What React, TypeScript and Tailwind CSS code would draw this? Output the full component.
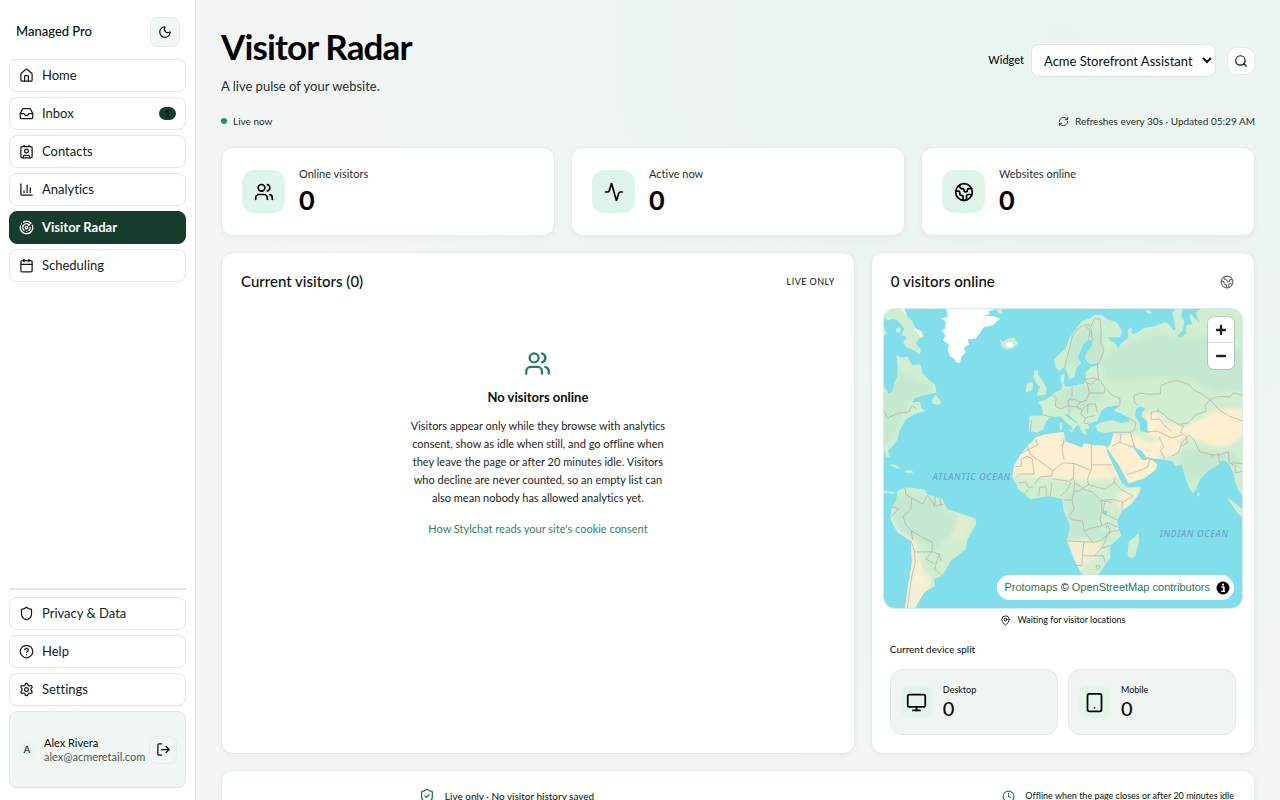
import type { ReactNode } from "react"
import {
  Activity,
  Calendar,
  ChartColumn,
  CircleHelp,
  Clock,
  Contact,
  Earth,
  House,
  Inbox,
  LogOut,
  MapPin,
  Monitor,
  Moon,
  Radar,
  RefreshCw,
  Search,
  Settings,
  Shield,
  ShieldCheck,
  Tablet,
  Users,
  type LucideIcon,
} from "lucide-react"

type NavEntry = { label: string; icon: LucideIcon; badge?: number; active?: boolean }

const mainNav: NavEntry[] = [
  { label: "Home", icon: House },
  { label: "Inbox", icon: Inbox, badge: 1 },
  { label: "Contacts", icon: Contact },
  { label: "Analytics", icon: ChartColumn },
  { label: "Visitor Radar", icon: Radar, active: true },
  { label: "Scheduling", icon: Calendar },
]

const footerNav: NavEntry[] = [
  { label: "Privacy & Data", icon: Shield },
  { label: "Help", icon: CircleHelp },
  { label: "Settings", icon: Settings },
]

const stats = [
  { label: "Online visitors", value: 0, icon: Users },
  { label: "Active now", value: 0, icon: Activity },
  { label: "Websites online", value: 0, icon: Earth },
]

const devices = [
  { label: "Desktop", value: 0, icon: Monitor },
  { label: "Mobile", value: 0, icon: Tablet },
]

function NavLink({ label, icon: Icon, badge, active }: NavEntry) {
  return (
    <a
      href="#"
      className={
        active
          ? "flex h-[33px] items-center gap-2 rounded-lg border border-[#163d2b] bg-[#163d2b] px-[9px] text-[13px] font-bold text-white"
          : "flex h-[33px] items-center gap-2 rounded-lg border border-[#e1e7e5] bg-white px-[9px] text-[13px] text-[#111c17]"
      }
    >
      <Icon size={15} />
      <span>{label}</span>
      {badge !== undefined && (
        <span className="ml-auto flex h-[13px] w-[17px] items-center justify-center rounded-full bg-[#163d2b] text-[9px] font-bold text-[#04100a]">
          {badge}
        </span>
      )}
    </a>
  )
}

function Sidebar() {
  return (
    <aside className="flex w-[196px] shrink-0 flex-col border-r border-[#e1e7e5] bg-[#fdfefe] px-[9px] pb-3">
      <div className="flex items-center justify-between pt-[17px] pr-[6px] pb-3 pl-[7px]">
        <span className="text-[13px] font-medium">Managed Pro</span>
        <button
          aria-label="Toggle dark mode"
          className="flex size-[30px] items-center justify-center rounded-lg border border-[#e6eeea] bg-[#f1f7f4]"
        >
          <Moon size={14} />
        </button>
      </div>
      <nav className="flex flex-col gap-[5px]">
        {mainNav.map((item) => (
          <NavLink key={item.label} {...item} />
        ))}
      </nav>

      <div className="mt-auto flex flex-col gap-[5px] border-t-2 border-[#e1e7e5] pt-[7px]">
        {footerNav.map((item) => (
          <NavLink key={item.label} {...item} />
        ))}
        <div className="flex h-[77px] items-center rounded-lg border border-[#e1e9e5] bg-[#eff6f3] pr-2 pl-[7px]">
          <span className="flex size-5 items-center justify-center rounded-full bg-[#ecf5f0] text-[10px] font-medium">A</span>
          <div className="ml-[7px] flex-1 text-[11px] leading-[14px]">
            <p>Alex Rivera</p>
            <p className="text-[#4a5651]">alex@acmeretail.com</p>
          </div>
          <button
            aria-label="Log out"
            className="flex size-7 items-center justify-center rounded-lg border border-[#e6eeea] bg-[#f1f7f4]"
          >
            <LogOut size={15} />
          </button>
        </div>
      </div>
    </aside>
  )
}

function Panel({ className, children }: { className?: string; children: ReactNode }) {
  return (
    <section className={`rounded-xl border border-[#e4ebe8] bg-white shadow-[0_2px_6px_rgba(20,60,40,0.04)] ${className ?? ""}`}>
      {children}
    </section>
  )
}

const eurasia =
  "M546 330 L562 312 L580 296 L592 265 L610 240 L630 213 L655 205 L668 194 L690 196 L705 207 L735 218 L752 245 L745 262 L708 262 L716 274 L726 276 L740 296 L748 280 L770 262 L768 240 L778 232 L782 254 L800 246 L815 235 L850 228 L880 216 L895 226 L905 242 L912 238 L902 190 L912 177 L932 177 L930 200 L938 215 L934 240 L918 256 L925 264 L942 252 L944 226 L962 222 L952 198 L958 192 L985 220 L972 190 L985 177 L1113 177 L1113 740 L1100 722 L1092 700 L1085 670 L1072 642 L1060 632 L1045 642 L1010 662 L985 690 L972 722 L964 732 L950 712 L940 680 L930 646 L912 650 L902 636 L872 630 L850 628 L822 622 L812 606 L790 594 L786 584 L780 590 L798 614 L812 632 L834 630 L842 634 L857 644 L850 662 L820 686 L770 702 L764 690 L742 648 L722 620 L706 596 L715 585 L722 562 L724 546 L700 550 L676 545 L670 528 L690 518 L722 512 L745 520 L775 516 L770 504 L745 490 L726 484 L742 468 L722 470 L705 472 L690 482 L682 498 L676 514 L662 518 L648 524 L652 536 L640 540 L645 556 L632 552 L624 534 L612 516 L596 502 L586 492 L578 494 L590 506 L606 516 L618 526 L610 532 L602 544 L600 532 L584 520 L566 500 L550 502 L530 506 L518 524 L514 540 L494 549 L480 546 L470 546 L472 498 L500 498 L512 496 L510 474 L498 456 L520 450 L536 440 L548 428 L568 420 L570 402 L564 384 L572 372 L577 382 L574 400 L582 412 L602 408 L636 402 L642 388 L640 370 L655 352 L680 344 L682 340 L652 342 L640 326 L642 310 L660 290 L662 272 L650 268 L634 282 L622 310 L616 324 L628 340 L614 352 L608 380 L594 390 L582 362 L578 350 L562 364 L550 352 Z"

const africa =
  "M490 564 L520 554 L575 547 L580 575 L605 585 L630 595 L635 580 L662 586 L692 588 L702 592 L706 608 L725 650 L750 700 L768 715 L808 712 L800 735 L776 766 L750 785 L735 815 L748 860 L715 890 L715 925 L680 977 L640 985 L630 977 L610 940 L585 875 L595 830 L575 785 L570 750 L532 740 L475 750 L440 720 L420 682 L425 650 L445 615 L465 590 Z"

const southAmerica =
  "M75 725 L96 714 L120 715 L155 720 L165 735 L210 750 L225 780 L260 790 L310 808 L312 825 L285 870 L280 900 L235 935 L210 980 L185 990 L188 1010 L155 1030 L140 1055 L128 1077 L97 1077 L105 1020 L118 940 L115 875 L75 850 L52 805 L58 775 L70 755 Z"

const northAmerica =
  "M33 177 L95 177 L105 200 L120 215 L128 235 L148 245 L155 262 L140 265 L130 280 L145 300 L142 314 L118 298 L100 292 L92 278 L102 262 L88 255 L95 235 L75 212 L60 206 L45 212 L33 202 Z M72 316 L88 324 L106 320 L118 346 L144 344 L150 370 L170 392 L188 404 L192 428 L160 436 L124 446 L120 458 L142 456 L146 474 L160 484 L130 492 L100 508 L80 545 L75 570 L60 590 L46 602 L52 625 L42 622 L33 600 L33 408 L48 432 L62 424 L64 402 L74 380 L75 350 Z M178 452 L190 434 L206 458 L200 466 L180 462 Z M70 236 L84 232 L82 248 L72 248 Z M33 226 L42 250 L33 262 Z"

const islands =
  "M382 266 L392 276 L404 268 L425 263 L437 280 L425 294 L404 300 L388 288 Z M372 177 L388 177 L390 192 L378 190 Z M486 362 L498 362 L498 376 L512 392 L524 418 L520 434 L494 438 L498 422 L504 412 L494 402 L484 384 Z M464 402 L482 396 L482 420 L460 428 Z M566 376 L578 372 L574 400 L566 400 Z M562 520 L572 518 L570 540 L564 540 Z M588 542 L604 542 L600 548 Z M770 878 L790 862 L800 852 L802 874 L790 920 L780 928 L767 918 Z M978 728 L984 732 L982 742 L976 738 Z M1066 745 L1084 756 L1113 780 L1113 806 L1096 788 Z M48 645 L66 646 L86 658 L72 656 Z M96 664 L118 662 L122 670 L98 670 Z M33 724 L56 726 L72 730 L60 734 L33 730 Z M820 180 L836 182 L842 192 L828 190 Z"

const borders = [
  // Scandinavia and the Baltics
  "M578 350 L586 320 L594 290 L600 262 L616 238 L632 226 L652 224 M650 268 L654 244 L640 226 M662 272 L656 232 L668 206 L684 208 L688 250 L686 276 L696 302 L684 334 L676 344 L680 388",
  // Central Europe
  "M540 434 L552 446 L550 470 L566 478 L590 466 L588 452 L600 440 L600 410 M588 452 L606 448 L624 458 L642 452 L652 430 L648 408 L640 390 L664 384 L684 392 L700 416 L696 430 L652 430 M624 458 L614 472 L590 470 L592 488 M614 472 L630 480 L648 464 L670 462 L676 488 M630 480 L626 494 L640 504 L668 498 M640 504 L636 520 L650 522 M648 464 L646 492 M512 496 L546 504 M478 512 L474 546 M704 420 L722 438 L744 446 L744 466 L726 474 M642 398 L656 404 L676 388",
  // Kazakhstan, Mongolia and China
  "M800 466 L788 458 L786 438 L804 430 L830 434 L866 432 L868 408 L888 398 L916 392 L934 398 L952 404 L968 422 L990 432 L1014 450 L1034 442 L1058 440 L1076 442 L1086 430 L1113 436 M1014 450 L1000 470 L1004 484 L972 496 L950 520 L920 524 L888 506 L876 494 L860 484 L838 488 L838 510 L864 508 L880 530 L900 544 M1014 450 L1030 466 L1044 482 L1074 500 L1113 514 M920 524 L936 530 L926 548 L944 560 L946 580 L930 590",
  // Middle East and South Asia
  "M770 504 L792 520 L788 540 L776 548 L724 548 M776 548 L784 580 L790 594 M748 552 L744 578 L720 590 M744 578 L780 592 M834 630 L828 652 L796 666 L764 676 M820 548 L856 544 L900 566 L932 556 M862 562 L876 592 L866 604 L880 628 M900 620 L920 610 L930 580 L952 556 L968 572 L984 606 L1020 616 L1044 616 L1070 606 M1020 616 L1022 624 M1040 612 L1044 640 L1056 634 M1070 606 L1074 640 L1092 650 L1090 670 L1113 666 M1080 640 L1113 642",
  // North Africa
  "M492 570 L496 586 L446 612 M465 590 L474 614 L542 664 L572 640 L606 642 L656 662 M576 566 L570 600 L576 630 M580 575 L566 590 M658 586 L658 662 M658 646 L720 646 M428 652 L448 650 L446 630 L464 620 L480 628 L486 674 L442 674 L432 684 M542 664 L538 680 L506 682 L486 704 M606 642 L604 684 L594 696 L540 688 M656 662 L646 690 L650 706 L632 716 L608 700 L604 684",
  // Sub-Saharan Africa
  "M440 700 L460 698 L470 716 L484 712 M456 736 L468 720 M500 742 L502 714 L522 712 L522 742 M534 740 L540 700 M596 700 L586 720 L566 740 M608 700 L606 724 L618 726 L632 718 L660 728 L688 752 L690 790 L684 808 L690 830 L660 836 L636 846 L632 816 L602 812 L588 802 M606 724 L600 752 L576 752 M600 752 L606 780 L590 800 M650 706 L700 720 L726 700 L730 684 M726 700 L748 720 L784 740 L752 758 L724 750 L700 752 M752 758 L750 786 M700 752 L692 790 L736 812 M688 752 L720 760 M690 830 L706 820 L744 836 M706 820 L716 850 L686 874 L664 880 L640 852 M585 875 L640 878 L664 878 M636 878 L632 908 L630 950 L612 948 M632 920 L668 920 L690 896 L700 874 L706 850 L744 842 M668 920 L694 920 L700 940 M690 896 L714 890 M674 948 L684 950 L680 960 L672 956 Z",
  // South America
  "M96 714 L100 736 L118 746 L114 782 L92 800 M52 806 L78 778 L58 772 M92 800 L98 824 L116 844 L142 860 L180 880 L178 908 L200 914 L206 936 M118 746 L150 764 L166 738 M166 738 L186 770 L216 764 M188 744 L186 770 M202 748 L206 768 M116 844 L120 872 M115 875 L126 908 L150 908 L178 908 M200 914 L186 960 L210 980 M126 908 L128 940 L118 980 L112 1020 L104 1077 M178 908 L160 930 L186 944 M33 482 L44 506 L72 492 L110 486 L118 468 L132 478",
]

function WorldMap() {
  return (
    <svg
      viewBox="33 177 1080 900"
      preserveAspectRatio="xMidYMid slice"
      className="block h-full w-full"
      role="img"
      aria-label="World map of visitor locations"
    >
      <defs>
        <clipPath id="land">
          <path d={eurasia} />
          <path d={africa} />
          <path d={southAmerica} />
          <path d={northAmerica} />
          <path d={islands} />
        </clipPath>
        <filter id="soften" x="-20%" y="-20%" width="140%" height="140%">
          <feGaussianBlur stdDeviation="7" />
        </filter>
      </defs>
      <rect x="33" y="177" width="1080" height="900" fill="#81dfec" />
      <g clipPath="url(#land)">
        <rect x="33" y="177" width="1080" height="900" fill="#cfeed0" />
        <g filter="url(#soften)">
          {/* forest */}
          <path fill="#c4e8d0" d="M690 330 L760 280 L860 250 L940 270 L1040 250 L1130 320 L1130 420 L1040 430 L960 390 L880 380 L780 390 L700 390 Z" />
          <path fill="#c4e8d0" d="M580 340 L600 270 L650 220 L690 240 L690 340 L640 340 Z" />
          <path fill="#c4e8d0" d="M540 440 L600 415 L690 400 L690 450 L640 490 L560 470 Z" />
          <path fill="#c4e8d0" d="M20 450 L90 370 L180 410 L180 430 L110 450 L70 550 L20 600 Z" />
          <path fill="#c4e8d0" d="M60 740 L170 740 L230 790 L290 810 L230 860 L190 900 L120 870 L70 840 Z" />
          <path fill="#c4e8d0" d="M565 740 L620 720 L690 750 L680 830 L720 870 L590 870 L590 800 Z" />
          <path fill="#c4e8d0" d="M925 600 L970 600 L1090 610 L1113 650 L1040 650 L980 690 L940 690 Z" />
          {/* desert */}
          <path fill="#feefd0" d="M410 680 L440 600 L500 570 L580 570 L720 580 L760 680 L700 690 L600 692 L520 684 Z" />
          <path fill="#feefd0" d="M700 560 L770 552 L800 560 L830 580 L900 560 L940 590 L900 620 L860 618 L870 660 L770 710 L700 600 Z" />
          <path fill="#feefd0" d="M826 486 L860 490 L880 520 L940 534 L980 510 L1040 480 L1120 476 L1120 556 L1070 590 L1020 590 L970 566 L900 570 L820 560 Z" />
          <path fill="#feefd0" d="M480 552 L580 545 L570 580 L500 590 Z" />
          <path fill="#f1efcf" d="M580 870 L640 872 L690 880 L680 920 L640 950 L620 970 Z" />
          <path fill="#f3efce" d="M740 730 L810 710 L790 750 L750 790 L730 760 Z" />
          <path fill="#e2edcd" d="M260 800 L300 810 L280 860 L230 890 L240 840 Z" />
          <path fill="#f6efd2" d="M50 800 L80 850 L130 880 L150 960 L180 990 L140 1077 L90 1080 L110 900 L50 850 Z" />
        </g>
        {/* northern ice */}
        <path fill="#ffffff" d="M86 177 L102 177 L108 194 L96 192 Z M122 216 L136 240 L148 248 L146 262 L128 240 Z M400 280 L420 276 L424 290 L406 292 Z" />
      </g>
      <path
        fill="#ffffff"
        d="M222 177 L226 200 L206 206 L220 214 L218 236 L208 242 L220 258 L210 270 L230 284 L226 300 L232 318 L246 328 L250 336 L262 340 L268 318 L280 308 L274 294 L290 284 L286 268 L310 266 L326 244 L334 232 L362 226 L383 205 L362 198 L336 198 L352 192 L348 184 L370 177 Z"
      />
      {/* Caspian, Aral and the African lakes */}
      <path
        fill="#81dfec"
        d="M792 478 L806 470 L822 478 L812 486 L808 500 L826 514 L828 548 L806 546 L804 522 L790 500 Z M854 482 L862 478 L862 488 Z M694 784 L706 784 L704 796 L694 794 Z M700 820 L706 834 L702 840 Z"
      />
      <g fill="none" stroke="#b3a8a6" strokeWidth="2" strokeLinejoin="round">
        {borders.map((d) => (
          <path key={d} d={d} />
        ))}
      </g>
      <g fill="#6b9fd0" fontFamily="Noto Sans, sans-serif" fontStyle="italic" fontSize="27" fontWeight="500">
        <text x="180" y="691" letterSpacing="2">
          ATLANTIC OCEAN
        </text>
        <text x="864" y="863" letterSpacing="2">
          INDIAN OCEAN
        </text>
      </g>
    </svg>
  )
}

function MapCard() {
  return (
    <div className="relative mx-[11px] h-[301px] overflow-hidden rounded-xl border border-[#d9ebe6]">
      <WorldMap />
      <div className="absolute top-2 right-2 flex flex-col overflow-hidden rounded-md bg-white shadow-[0_0_0_1px_rgba(0,0,0,0.12)]">
        <button aria-label="Zoom in" className="flex size-[26px] items-center justify-center border-b border-[#dddddd]">
          <svg width="12" height="12" viewBox="0 0 12 12" stroke="#222" strokeWidth="2.4" strokeLinecap="round">
            <path d="M2 6h8M6 2v8" />
          </svg>
        </button>
        <button aria-label="Zoom out" className="flex size-[26px] items-center justify-center">
          <svg width="12" height="12" viewBox="0 0 12 12" stroke="#222" strokeWidth="2.4" strokeLinecap="round">
            <path d="M2 6h8" />
          </svg>
        </button>
      </div>
      <div className="absolute right-2 bottom-2 flex h-[25px] items-center gap-[6px] rounded-full bg-white pr-1 pl-[7px] font-['Liberation_Sans',sans-serif] text-[11px]">
        <span>
          <a href="#" className="text-[#237a55]">Protomaps</a> ©{" "}
          <a href="#" className="text-[#237a55]">OpenStreetMap contributors</a>
        </span>
        <button aria-label="Toggle attribution">
          <svg width="14" height="14" viewBox="0 0 14 14">
            <circle cx="7" cy="7" r="6.5" fill="#000" />
            <path d="M5.4 6h2.4v4M5.2 10.2h3.8" stroke="#fff" strokeWidth="1.6" fill="none" />
            <circle cx="7" cy="3.6" r="1.1" fill="#fff" />
          </svg>
        </button>
      </div>
    </div>
  )
}

export default function App() {
  return (
    <div className="flex h-screen overflow-hidden bg-[#f3f7f6] font-[Lato,sans-serif] text-[#06100b] [font-variant-ligatures:none]">
      <Sidebar />
      <main className="flex-1 overflow-y-auto bg-[radial-gradient(ellipse_at_80%_5%,#eaf4ef_0%,#f2f6f5_75%)] px-[25px] pb-6 [scrollbar-width:none]">
        <header className="flex items-center justify-between pt-[22px]">
          <div className="pb-[3px]">
            <h1 className="text-[35px] leading-[48px] font-bold tracking-tight text-black">Visitor Radar</h1>
            <p className="mt-[6px] text-[13px] leading-5 text-[#26302b]">A live pulse of your website.</p>
          </div>
          <div className="flex items-center">
            <label htmlFor="widget" className="mr-[7px] text-[11px] font-medium">
              Widget
            </label>
            <select id="widget" className="h-[33px] w-[185px] rounded-lg border border-[#dde6e2] bg-white pl-2 text-[13px]">
              <option>Acme Storefront Assistant</option>
            </select>
            <button
              aria-label="Search"
              className="ml-[11px] flex size-7 items-center justify-center rounded-[10px] border border-[#e4ebe8] bg-white"
            >
              <Search size={14} />
            </button>
          </div>
        </header>

        <div className="mt-3 flex h-5 items-center justify-between text-[10px] text-[#26302b]">
          <span className="flex items-center gap-[6px]">
            <span className="size-[6px] rounded-full bg-[#149a68]" />
            Live now
          </span>
          <span className="flex items-center gap-[6px]">
            <RefreshCw size={11} />
            Refreshes every 30s · Updated 05:29 AM
          </span>
        </div>

        <div className="mt-4 grid grid-cols-3 gap-4">
          {stats.map(({ label, value, icon: Icon }) => (
            <Panel key={label} className="flex h-[89px] items-center px-5">
              <span className="flex size-[43px] items-center justify-center rounded-xl bg-[#e0f5ea]">
                <Icon size={20} className="text-black" />
              </span>
              <div className="ml-[14px]">
                <p className="text-[11px] leading-4 text-[#26302b]">{label}</p>
                <p className="text-[27px] leading-9 font-bold text-black">{value}</p>
              </div>
            </Panel>
          ))}
        </div>

        <div className="mt-4 grid grid-cols-[1.65fr_1fr] gap-4">
          <Panel className="px-[19px]">
            <div className="flex h-[57px] items-center justify-between">
              <h2 className="text-[15px] font-medium">Current visitors (0)</h2>
              <span className="text-[9px] tracking-wider">LIVE ONLY</span>
            </div>
            <div className="mx-auto flex max-w-[264px] flex-col items-center pt-10 text-center">
              <Users size={27} className="text-[#237a55]" />
              <h3 className="mt-[10px] text-[13px] leading-5 font-bold">No visitors online</h3>
              <p className="mt-[10px] text-[11px] leading-[18px] text-[#1c2621]">
                Visitors appear only while they browse with analytics consent, show as idle when still, and go offline when they
                leave the page or after 20 minutes idle. Visitors who decline are never counted, so an empty list can also mean
                nobody has allowed analytics yet.
              </p>
              <a href="#" className="mt-[13px] text-[11px] leading-[18px] text-[#2f8560]">
                How Stylchat reads your site's cookie consent
              </a>
            </div>
          </Panel>

          <Panel>
            <div className="flex h-[55px] items-center justify-between pt-[2px] pr-5 pl-[19px]">
              <h2 className="text-[15px] font-medium">0 visitors online</h2>
              <Earth size={14} className="text-[#66706b]" />
            </div>
            <MapCard />
            <p className="mt-[3px] flex items-center justify-center gap-[6px] text-[9px] leading-4">
              <MapPin size={11} />
              Waiting for visitor locations
            </p>
            <div className="px-[18px] pb-[18px]">
              <h3 className="mt-[13px] text-[10px] leading-4">Current device split</h3>
              <div className="mt-3 grid grid-cols-2 gap-[10px]">
                {devices.map(({ label, value, icon: Icon }) => (
                  <div key={label} className="flex h-[66px] items-center rounded-xl border border-[#e1eae6] bg-[#eff5f2] px-[10px]">
                    <span className="flex size-8 items-center justify-center rounded-lg bg-[#e4f5ec]">
                      <Icon size={21} className="text-black" />
                    </span>
                    <div className="ml-[10px]">
                      <p className="text-[9px] leading-3">{label}</p>
                      <p className="text-[20px] leading-6 font-medium">{value}</p>
                    </div>
                  </div>
                ))}
              </div>
            </div>
          </Panel>
        </div>

        <Panel className="mt-4 grid grid-cols-[16fr_14fr] px-5 py-[17px] leading-4">
          <span className="flex items-center justify-center gap-[10px] text-[10px]">
            <ShieldCheck size={16} className="text-[#237a55]" />
            Live only · No visitor history saved
          </span>
          <span className="flex items-center justify-end gap-[10px] text-[9px]">
            <Clock size={13} className="text-[#237a55]" />
            Offline when the page closes or after 20 minutes idle
          </span>
        </Panel>
      </main>
    </div>
  )
}
